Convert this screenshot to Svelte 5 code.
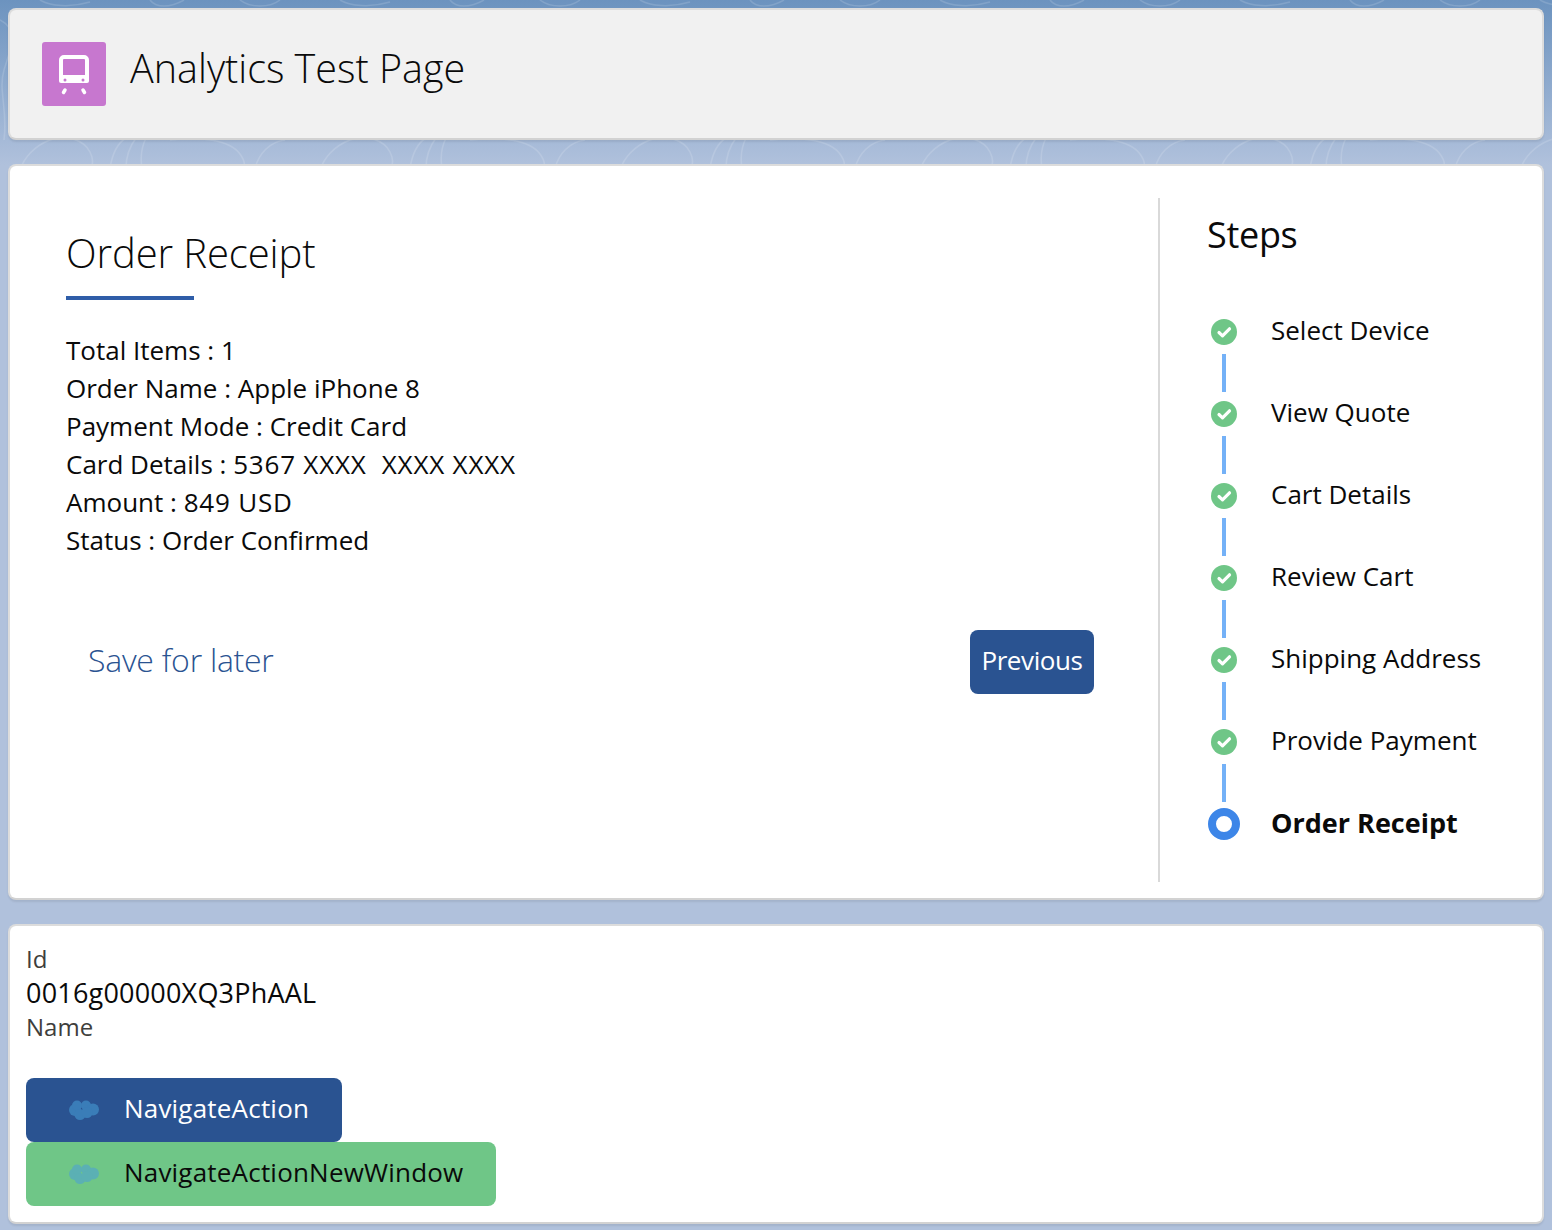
<script>
  const receipt = [
    ["Total Items", "1"],
    ["Order Name", "Apple iPhone 8"],
    ["Payment Mode", "Credit Card"],
    ["Card Details", "5367 XXXX\u00a0 XXXX XXXX", true],
    ["Amount", "849 USD", true],
    ["Status", "Order Confirmed"]
  ];
  const steps = [
    "Select Device",
    "View Quote",
    "Cart Details",
    "Review Cart",
    "Shipping Address",
    "Provide Payment"
  ];
  const lumps = [
    [6, 10, 6],
    [8, 5.5, 5],
    [17, 5.5, 5],
    [24, 9.5, 6],
    [11, 14.5, 5.5],
    [18, 12.5, 5.5]
  ];
</script>

{#snippet cloud(fill)}
  <svg viewBox="0 0 30 20" width="30" height="20">
    {#each lumps as [cx, cy, r]}
      <circle {cx} {cy} {r} {fill} />
    {/each}
  </svg>
{/snippet}

<div class="page">
  <header class="card head">
    <div class="app-icon">
      <svg viewBox="0 0 64 64" width="64" height="64">
        <rect x="19" y="15" width="26" height="24" rx="3" fill="none" stroke="#fff" stroke-width="4" />
        <rect x="17" y="33" width="30" height="8" rx="2" fill="#fff" />
        <circle cx="23" cy="38" r="1.500" fill="#c777cf" />
        <circle cx="41" cy="38" r="1.500" fill="#c777cf" />
        <path d="M23 48l-1.500 2.500M41 48l1.500 2.500" stroke="#fff" stroke-width="3.500" stroke-linecap="round" />
      </svg>
    </div>
    <h1>Analytics Test Page</h1>
  </header>

  <section class="card main">
    <div class="receipt">
      <h2>Order Receipt</h2>
      <div class="rule"></div>
      <div class="lines">
        {#each receipt as [name, val, wide]}
          <div>{name} : <span class:wide>{val}</span></div>
        {/each}
      </div>
      <div class="actions">
        <span class="save">Save for later</span>
        <span class="btn"><span>Previous</span></span>
      </div>
    </div>
    <aside class="steps">
      <h3>Steps</h3>
      <ol>
        {#each steps as step}
          <li>
            <div class="marker">
              <svg class="done" viewBox="0 0 26 26" width="26" height="26">
                <circle cx="13" cy="13" r="13" fill="#6fc687" />
                <path d="M8 13.500l3.500 3.300 7-7" fill="none" stroke="#fff" stroke-width="3.200" stroke-linecap="round" stroke-linejoin="round" />
              </svg>
              <div class="link"></div>
            </div>
            <span>{step}</span>
          </li>
        {/each}
        <li class="current">
          <div class="marker"><div class="dot"></div></div>
          <span>Order Receipt</span>
        </li>
      </ol>
    </aside>
  </section>

  <section class="card record">
    <div class="label">Id</div>
    <div class="value">0016g00000XQ3PhAAL</div>
    <div class="label">Name</div>
    <div class="navs">
      <div class="nav blue">
        {@render cloud("#3a7db8")}
        <span>NavigateAction</span>
      </div>
      <div class="nav green">
        {@render cloud("#5bb0b4")}
        <span>NavigateActionNewWindow</span>
      </div>
    </div>
  </section>
</div>

<style>
  :global(body) {
    margin: 0;
    background:
      url("data:image/svg+xml,%3Csvg xmlns='http://www.w3.org/2000/svg' width='300' height='170' fill='none' stroke='%23fff' stroke-opacity='.14' stroke-width='1.500'%3E%3Cpath d='M20 170c4-12 14-24 30-30s34 0 40 12 0 18-4 18M110 168c2-12 6-24 16-30M126 168c0-12 4-22 10-30M142 168c-2-12 0-22 4-30M170 140c30-4 60 0 70 14s0 16-6 16M255 168c4-14 14-26 30-28M0 20c20 10 10 30 4 50s4 40 0 70M40 0c10 6 30 8 50 2M150 0c6 8 20 8 34 0M240 0c10 8 30 8 40 0'/%3E%3C/svg%3E") repeat-x 0 0 / 300px 170px,
      linear-gradient(#6c93bf 0, #b0c1dc 165px, #b0c1dc 100%);
  }
  .page {
    height: 1230px;
    box-sizing: border-box;
    padding: 8px 8px 0;
    display: flex;
    flex-direction: column;
    gap: 24px;
    font-family: "Open Sans", "Noto Sans", sans-serif;
    color: #0a0a0a;
  }
  .card {
    background: #fff;
    border: 2px solid #dcdcdc;
    border-bottom-color: #d2d2d2;
    border-radius: 8px;
    box-sizing: border-box;
    width: 1536px;
    flex: none;
    box-shadow: 0 2px 2px rgba(0, 0, 0, 0.08);
  }
  .head {
    height: 132px;
    background: #f1f1f1;
    padding: 32px;
    display: flex;
    align-items: center;
    gap: 24px;
  }
  .app-icon {
    width: 64px;
    height: 64px;
    background: #c777cf;
    border-radius: 3px;
  }
  .app-icon svg {
    display: block;
  }
  h1 {
    margin: 0 0 12px;
    font-size: 39.500px;
    font-weight: 300;
  }
  .main {
    height: 736px;
    display: flex;
    padding: 32px 0 16px;
  }
  .receipt {
    width: 1150px;
    height: 684px;
    box-sizing: border-box;
    border-right: 2px solid #d9d9d9;
    padding: 0 64px 0 56px;
  }
  h2 {
    margin: 29px 0 0;
    font-size: 40px;
    line-height: 52px;
    font-weight: 300;
    letter-spacing: -0.1px;
  }
  .rule {
    width: 128px;
    height: 4px;
    background: #2f5da8;
    margin-top: 17px;
  }
  .lines {
    margin-top: 31px;
    font-size: 26px;
    line-height: 38px;
  }
  .wide {
    letter-spacing: 0.8px;
  }
  .actions {
    margin-top: 71px;
    display: flex;
    justify-content: space-between;
    align-items: center;
    padding-left: 22px;
  }
  .save {
    font-size: 32px;
    font-weight: 300;
    color: #2a5391;
    letter-spacing: -0.25px;
    padding-bottom: 6px;
  }
  .btn {
    width: 124px;
    height: 64px;
    background: #2a5391;
    color: #fff;
    border-radius: 8px;
    font-size: 26px;
    letter-spacing: -0.4px;
    display: flex;
    align-items: center;
    justify-content: center;
  }
  .btn span {
    padding-bottom: 4px;
  }
  .steps {
    padding-left: 47px;
  }
  h3 {
    margin: 0 0 45px;
    font-size: 36px;
    line-height: 74px;
    font-weight: 400;
    letter-spacing: -0.3px;
    height: 76px;
  }
  ol {
    list-style: none;
    margin: 0;
    padding: 0;
  }
  li {
    display: flex;
    height: 82px;
    font-size: 26px;
  }
  li span {
    line-height: 36px;
    margin-top: -7px;
  }
  .marker {
    width: 64px;
    flex: none;
    padding-left: 4px;
    box-sizing: border-box;
  }
  .done {
    display: block;
  }
  .link {
    width: 4px;
    height: 38px;
    background: #74b1f7;
    margin: 9px 0 0 11px;
  }
  .current {
    font-weight: 700;
    font-size: 27px;
  }
  .current span {
    margin-top: -6px;
  }
  .current .marker {
    padding-left: 1px;
  }
  .dot {
    width: 32px;
    height: 32px;
    box-sizing: border-box;
    border: 8px solid #3d86e8;
    border-radius: 50%;
    background: #fff;
    margin-top: -3px;
  }
  .record {
    height: 300px;
    padding: 16px 16px 0;
  }
  .label {
    font-size: 24px;
    line-height: 34px;
    color: #3e3e3c;
  }
  .value {
    font-size: 27px;
    line-height: 34px;
    letter-spacing: 0.2px;
  }
  .navs {
    margin-top: 34px;
    display: flex;
    flex-direction: column;
    align-items: flex-start;
  }
  .nav {
    height: 64px;
    border-radius: 8px;
    display: flex;
    align-items: center;
    gap: 25px;
    padding: 0 33px 0 43px;
    font-size: 26px;
    letter-spacing: 0.2px;
  }
  .nav span {
    padding-bottom: 4px;
  }
  .blue {
    background: #2a5391;
    color: #fff;
  }
  .green {
    background: #6fc687;
    color: #0a0a0a;
  }
</style>
